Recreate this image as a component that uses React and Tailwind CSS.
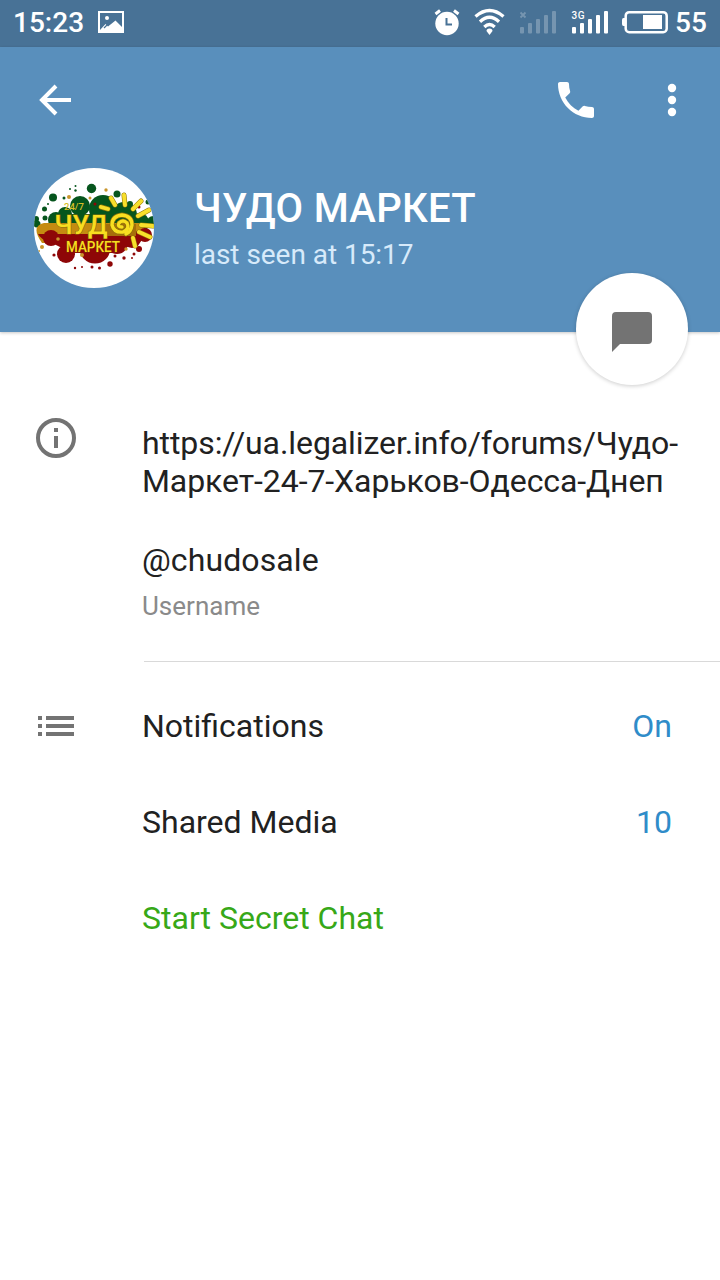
const Signal = ({ label, faded }) => (
  <svg className={faded ? 'h-[24px] w-[40px] opacity-25' : 'h-[24px] w-[40px]'} viewBox="0 0 40 24" fill="#fff">
    <rect x="2" y="17" width="4" height="6.500" rx="1" />
    <rect x="10" y="13" width="4" height="10.500" rx="1" />
    <rect x="18" y="9" width="4" height="14.500" rx="1" />
    <rect x="26" y="5" width="4" height="18.500" rx="1" />
    <rect x="34" y="1" width="4" height="22.500" rx="1" />
    {label ? (
      <text x="1.5" y="8.5" fontSize="10" fontWeight="500" fontFamily="Roboto, sans-serif" textLength="13">{label}</text>
    ) : (
      <path d="M2.500 2.500l5 5M7.500 2.500l-5 5" stroke="#fff" strokeWidth="1.800" />
    )}
  </svg>
)

function StatusBar() {
  return (
    <div className="flex h-[47px] items-start bg-[#487296] text-[28px] font-medium leading-[46px] text-white">
      <span className="w-[72px] pl-[13px]">15:23</span>
      <svg className="ml-[26px] mt-[11px] h-[22px] w-[26px]" viewBox="0 0 26 22">
        <path fill="#fff" fillRule="evenodd" d="M0 0h26v22H0zM2 2v17l5.500-6 2.500 2.500L17.500 9.500 24 16V2zM7 7a2 2 0 1 0 4 0a2 2 0 1 0-4 0" />
        <path stroke="#487296" strokeWidth="1.200" d="M6 17l4.500-4.500" />
      </svg>
      <svg className="ml-[310px] mt-[9px] h-[27px] w-[26px]" viewBox="0 0 26 27" fill="none">
        <circle cx="13" cy="14.500" r="11.700" fill="#fff" />
        <path d="M1.500 5L6 1.500M24.500 5L20 1.500" stroke="#fff" strokeWidth="3" />
        <path d="M12.500 9v6.500H18" stroke="#487296" strokeWidth="2" />
      </svg>
      <svg className="ml-[14px] mt-[8px] h-[28px] w-[32px]" viewBox="0 0 32 28" fill="none" stroke="#fff" strokeWidth="3.300">
        <path d="M1.500 8.500Q15.500-3.500 29.500 8.500M6 13.700Q15.500 5 25 13.700M10.300 19Q15.500 14 20.700 19" />
        <path d="M15.500 27l-3-4a3 2.500 0 0 1 6 0z" fill="#fff" stroke="none" />
      </svg>
      <div className="ml-[12px] mt-[10px]"><Signal faded /></div>
      <div className="ml-[12px] mt-[10px]"><Signal label="3G" /></div>
      <svg className="ml-[12px] mt-[10px] h-[24px] w-[46px]" viewBox="0 0 46 24">
        <rect x="3.700" y="2.200" width="41" height="20" rx="3.500" fill="none" stroke="#fff" strokeWidth="2.500" />
        <path d="M3 8v8H1.500Q0 16 0 14V10Q0 8 1.500 8z" fill="#fff" />
        <rect x="21" y="5" width="19" height="14" fill="#fff" />
      </svg>
      <span className="ml-[7px]">55</span>
    </div>
  )
}

const greenDots = [[33, 42.500, 4], [71.500, 33.500, 4.700], [24.500, 54, 2.500], [97, 39, 3.500], [55.500, 35.500, 1.200], [55.500, 31, 1], [50, 34, 1], [28, 49, 1], [44, 43, 1.500], [128, 47, 2.500], [16, 64, 3], [17, 69, 3.500], [25, 63, 2.500], [110, 49, 3]]
const redDots = [[34, 100, 1.600], [55, 113, 1.200], [62, 112, 1], [72, 112, 1.500], [79.500, 113, 1.500], [90, 109, 2.700], [95, 101, 1.500], [104, 103, 1.700], [114, 99, 1.500], [119, 94, 3], [112, 103, 1], [119, 52, 1.500], [75, 49, 1.500]]
const rays = 'M95 50l-4-7M105 50l-1-10M113 54l8-8M118 61l11-6M121 70l12 1M119 77l11 5M113 83l2 8M88 54l-7-2'
const swirl = 'M102 72q-5 0-3-4q4-4 8 0q3 6-4 9q-9 1-11-7q0-9 10-10q10 1 10 10q-1 7-6 9'

function Avatar() {
  return (
    <svg className="h-[120px] w-[120px] rounded-full bg-white" viewBox="14 13 120 120" role="img">
      <g fill="#06551d">
        {greenDots.map(([x, y, r]) => <circle key={x + '-' + y} cx={x} cy={y} r={r} />)}
        <circle cx="36" cy="65" r="8" />
        <circle cx="45" cy="59" r="7" />
        <circle cx="60" cy="51" r="10" />
        <circle cx="83" cy="54" r="14" />
        <circle cx="104" cy="60" r="13" />
        <circle cx="120" cy="67" r="9" />
        <circle cx="133" cy="67" r="6" />
        <path d="M38 59h82l8 16H32z" />
      </g>
      <path d="M24 68h96q6 4 5 15l-7 5H22q-12-17 2-20z" fill="#c58b11" />
      <g fill="#8e0607">
        {redDots.map(([x, y, r]) => <circle key={x + '-' + y} cx={x} cy={y} r={r} />)}
        <circle cx="31" cy="83" r="8" />
        <circle cx="46" cy="99" r="9" />
        <circle cx="75" cy="93" r="15.500" />
        <circle cx="97" cy="88" r="11" />
        <circle cx="112" cy="84" r="9" />
        <circle cx="125" cy="80" r="7" />
        <path d="M18 79h104q2 9-8 10L94 98H52L30 87Q20 84 18 79z" />
      </g>
      <g fill="#c9952b">
        <circle cx="49" cy="42" r="2" /><circle cx="86" cy="35" r="1.700" /><circle cx="70" cy="43" r="1.500" />
        <circle cx="38" cy="84" r="1.800" /><circle cx="62" cy="100" r="2" /><circle cx="106" cy="94" r="1.700" />
        <circle cx="22" cy="92" r="2" /><circle cx="19" cy="96" r="1" />
      </g>
      <path d="M86 69h30v12H86z" fill="#a66e0b" />
      <path d={rays} stroke="#917705" strokeWidth="5" strokeLinecap="round" />
      <path d={rays} stroke="#f8df2b" strokeWidth="3.900" strokeLinecap="round" />
      <text x="44" y="54.500" fontSize="9" fontWeight="500" fill="#d8bf28" fontFamily="Roboto, sans-serif" textLength="20" lengthAdjust="spacingAndGlyphs">24/7</text>
      <text x="34.500" y="79" fontSize="26" fontWeight="500" fill="#f8de20" stroke="#8b7008" strokeWidth="1.200" paintOrder="stroke" fontFamily="Roboto, sans-serif" textLength="53" lengthAdjust="spacingAndGlyphs">ЧУД</text>
      <path d={swirl} fill="none" stroke="#8b7008" strokeWidth="4.800" strokeLinecap="round" />
      <path d={swirl} fill="none" stroke="#f8de20" strokeWidth="3.400" strokeLinecap="round" />
      <text x="46" y="96.800" fontSize="14" fontWeight="500" fill="#f8de20" stroke="#792f04" strokeWidth=".8" paintOrder="stroke" fontFamily="Roboto, sans-serif" textLength="54" lengthAdjust="spacingAndGlyphs">МАРКЕТ</text>
    </svg>
  )
}

function Header() {
  return (
    <header className="relative h-[285px] bg-[#598fbc] text-white shadow-[0_1px_3px_rgba(0,0,0,0.22)]">
      <div className="flex h-[106px] items-center">
        <svg className="ml-[39px] h-[32px] w-[32px]" viewBox="0 0 32 32" fill="none" stroke="#fff" strokeWidth="4">
          <path d="M32 16H4M17 2L3 16l14 14" />
        </svg>
        <svg className="ml-[481px] h-[48px] w-[48px]" viewBox="0 0 24 24" fill="#fff">
          <path d="M6.620 10.790c1.440 2.830 3.760 5.140 6.590 6.590l2.200-2.200c.27-.27.67-.36 1.020-.24 1.120.37 2.330.57 3.570.57.55 0 1 .45 1 1V20c0 .55-.45 1-1 1-9.390 0-17-7.610-17-17 0-.55.45-1 1-1h3.500c.55 0 1 .45 1 1 0 1.250.2 2.450.57 3.570.11.35.03.74-.25 1.020l-2.200 2.200z" />
        </svg>
        <svg className="ml-[48px] h-[48px] w-[48px]" viewBox="0 0 48 48" fill="#fff">
          <circle cx="24" cy="12" r="4.200" /><circle cx="24" cy="24" r="4.200" /><circle cx="24" cy="36" r="4.200" />
        </svg>
      </div>
      <div className="flex pl-[34px] pt-[15px]">
        <Avatar />
        <div className="ml-[40px] pt-[17px]">
          <h1 className="text-[40px] font-medium leading-[48px] tracking-[0.3px]">ЧУДО МАРКЕТ</h1>
          <p className="mt-[5px] text-[28px] leading-[33px] tracking-[-0.04px] text-[#d7eafa]">last seen at 15:17</p>
        </div>
      </div>
      <button className="absolute left-[576px] top-[226px] flex h-[112px] w-[112px] items-center justify-center rounded-full bg-white shadow-[0_1px_4px_rgba(0,0,0,0.2)]">
        <svg className="mt-[6px] h-[40px] w-[40px]" viewBox="0 0 40 40">
          <path fill="#737373" d="M4 0H36Q40 0 40 4V28Q40 32 36 32H8L0 40V4Q0 0 4 0z" />
        </svg>
      </button>
    </header>
  )
}

const Row = ({ label, value }) => (
  <div className="flex h-[96px] items-center justify-between pr-[48px]">
    <span>{label}</span>
    <span className="text-[#2f8cc9]">{value}</span>
  </div>
)

export default function App() {
  return (
    <div className="h-[1280px] w-[720px] overflow-hidden bg-white font-['Roboto',sans-serif] text-[32px] leading-[38px] text-[#212121]">
      <StatusBar />
      <Header />
      <section className="flex h-[329px] pt-[92px]">
        <svg className="ml-[32px] mt-[-10px] h-[48px] w-[48px]" viewBox="0 0 48 48">
          <circle cx="24" cy="24" r="18" fill="none" stroke="#737373" strokeWidth="4" />
          <path fill="#737373" d="M22 14h4v4h-4zM22 22h4v12h-4z" />
        </svg>
        <div className="ml-[62px] w-[550px]">
          <p className="tracking-[-0.08px]">https://ua.legalizer.info/forums/Чудо-<br />Маркет-24-7-Харьков-Одесса-Днеп</p>
          <p className="mt-[41px] tracking-[0.1px]">@chudosale</p>
          <p className="mt-[12px] text-[26px] leading-[30px] text-[#8a8a8a]">Username</p>
        </div>
      </section>
      <div className="ml-[144px] h-px bg-[#d9d9d9]" />
      <section className="mt-[16px] flex">
        <svg className="ml-[38px] mt-[38px] h-[20px] w-[36px]" viewBox="0 0 36 20" fill="#737373">
          <path d="M0 0h4v4H0zM8 0h28v4H8zM0 8h4v4H0zM8 8h28v4H8zM0 16h4v4H0zM8 16h28v4H8z" />
        </svg>
        <div className="ml-[68px] flex-1">
          <Row label="Notifications" value="On" />
          <Row label="Shared Media" value="10" />
          <div className="flex h-[96px] items-center text-[#37a818]">Start Secret Chat</div>
        </div>
      </section>
    </div>
  )
}
